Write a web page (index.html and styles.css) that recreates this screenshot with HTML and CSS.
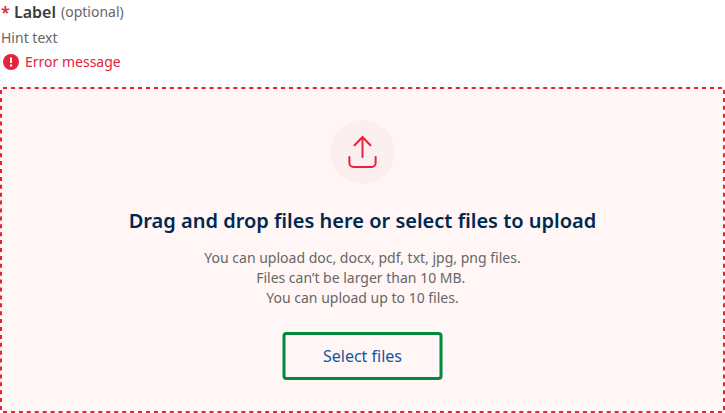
FILE: index.html
```html
<!DOCTYPE html>
<html lang="en">
<head>
<meta charset="utf-8">
<title>File upload</title>
<link rel="stylesheet" href="styles.css">
</head>
<body>
<div class="field">
  <div class="label-row"><span class="required">*</span><label class="label">Label</label><span class="optional">(optional)</span></div>
  <div class="hint">Hint text</div>
  <div class="error">
    <svg class="error-icon" viewBox="0 0 16 16"><circle cx="8" cy="8" r="8" fill="#e4233c"/><path d="M8 3.500v5.500" stroke="#fff" stroke-width="2"/><circle cx="8" cy="11.500" r="1.200" fill="#fff"/></svg>
    <span>Error message</span>
  </div>
  <div class="dropzone">
    <svg class="frame">
      <path class="dash-x" d="M3 1H722M3 325H722"/>
      <path class="dash-y" d="M1 3V323M724 3V323"/>
    </svg>
    <svg class="badge" viewBox="0 0 64 64">
      <circle class="badge-disc" cx="32.500" cy="32" r="32"/>
      <path class="badge-icon" d="M32.500 37V17M24.600 25.200l7.900-8.200 7.900 8.200M19.400 37v6a4 4 0 0 0 4 4h18.200a4 4 0 0 0 4-4v-6"/>
    </svg>
    <h2 class="title">Drag and drop files here or select files to upload</h2>
    <p class="details">You can upload doc, docx, pdf, txt, jpg, png files.<br>Files can’t be larger than 10 MB.&nbsp;<br>You can upload up to 10 files.</p>
    <button class="select"><svg class="outline"><rect x="1" y="1.500" width="157" height="45" rx="2.500"/></svg>Select files</button>
  </div>
</div>
</body>
</html>
```
FILE: styles.css
```css
* { box-sizing: border-box; }
body { margin: 0; background: #fff; font-family: "Noto Sans", sans-serif; font-size: 14px; line-height: 20px; color: #666; overflow: hidden; }
.field { width: 725px; height: 413px; display: flex; flex-direction: column; }
.label-row { height: 24px; padding-left: 1px; display: flex; line-height: 24px; }
.required { width: 13px; color: #e4233c; font-size: 16px; font-weight: 600; }
.label { color: #3b3b3b; font-size: 16px; font-weight: 600; margin-right: 5px; }
.hint { margin-top: 4px; padding-left: 1px; }
.error { margin-top: 4px; padding-left: 3px; display: flex; align-items: center; gap: 6px; color: #e4233c; }
.error-icon { width: 16px; height: 16px; }
.dropzone { position: relative; margin-top: 15px; height: 326px; padding-top: 33px; display: flex; flex-direction: column; align-items: center; background: #fff6f5; border-radius: 4px; }
.frame { position: absolute; inset: 0; width: 725px; height: 326px; fill: none; stroke: #e4233c; stroke-width: 2; }
.dash-x { stroke-dasharray: 4 3.944; }
.dash-y { stroke-dasharray: 4 3.9; }
.badge { flex: none; width: 64px; height: 64px; margin-right: 1px; overflow: visible; }
.badge-disc { fill: #fceff0; }
.badge-icon { fill: none; stroke: #e4233c; stroke-width: 2; stroke-linecap: round; stroke-linejoin: round; }
.title { margin: 23px 0 0; color: #00284f; font-size: 20px; line-height: 28px; font-weight: 600; }
.details { margin: 13px 0 0; text-align: center; }
.select { position: relative; margin-top: 24px; width: 160px; height: 48px; padding: 0; border: 0; background: none; color: #0f56a3; font: 16px/24px "Noto Sans", sans-serif; }
.outline { position: absolute; top: 0; left: 0; width: 160px; height: 48px; fill: none; stroke: #008a3b; stroke-width: 3; overflow: visible; }
```
